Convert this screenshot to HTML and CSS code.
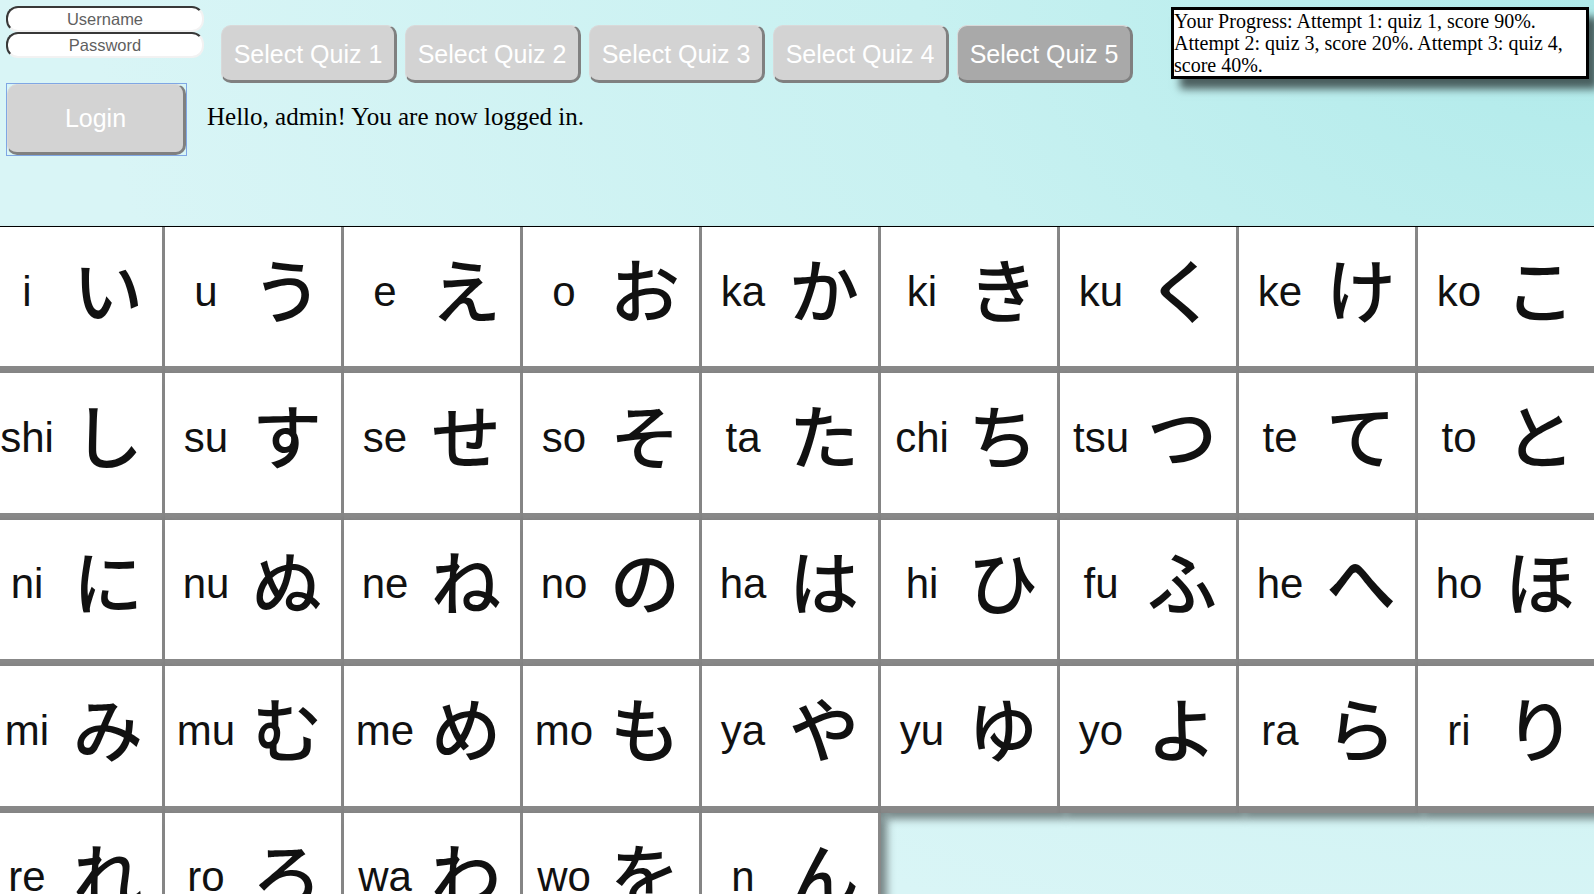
FILE: index.html
```html
<!DOCTYPE html>
<html lang="en">
<head>
<meta charset="utf-8">
<title>Hiragana Quiz</title>
<link rel="stylesheet" href="styles.css">
</head>
<body>
<header class="top">
  <div class="auth">
    <input class="field" type="text" placeholder="Username">
    <input class="field" type="password" placeholder="Password">
    <div class="login-wrap"><button class="login">Login</button></div>
  </div>
  <div class="main">
    <div class="quiz-row">
      <button class="quiz">Select Quiz 1</button>
      <button class="quiz">Select Quiz 2</button>
      <button class="quiz">Select Quiz 3</button>
      <button class="quiz">Select Quiz 4</button>
      <button class="quiz active">Select Quiz 5</button>
    </div>
    <p class="hello">Hello, admin! You are now logged in.</p>
  </div>
  <div class="progress">Your Progress: Attempt 1: quiz 1, score 90%. Attempt 2: quiz 3, score 20%. Attempt 3: quiz 4, score 40%.</div>
</header>
<section class="cards">
  <div class="card"><span class="ro">a</span><span class="kana">あ</span></div>
  <div class="card"><span class="ro">i</span><span class="kana">い</span></div>
  <div class="card"><span class="ro">u</span><span class="kana">う</span></div>
  <div class="card"><span class="ro">e</span><span class="kana">え</span></div>
  <div class="card"><span class="ro">o</span><span class="kana">お</span></div>
  <div class="card"><span class="ro">ka</span><span class="kana">か</span></div>
  <div class="card"><span class="ro">ki</span><span class="kana">き</span></div>
  <div class="card"><span class="ro">ku</span><span class="kana">く</span></div>
  <div class="card"><span class="ro">ke</span><span class="kana">け</span></div>
  <div class="card"><span class="ro">ko</span><span class="kana">こ</span></div>
  <div class="card"><span class="ro">sa</span><span class="kana">さ</span></div>
  <div class="card"><span class="ro">shi</span><span class="kana">し</span></div>
  <div class="card"><span class="ro">su</span><span class="kana">す</span></div>
  <div class="card"><span class="ro">se</span><span class="kana">せ</span></div>
  <div class="card"><span class="ro">so</span><span class="kana">そ</span></div>
  <div class="card"><span class="ro">ta</span><span class="kana">た</span></div>
  <div class="card"><span class="ro">chi</span><span class="kana">ち</span></div>
  <div class="card"><span class="ro">tsu</span><span class="kana">つ</span></div>
  <div class="card"><span class="ro">te</span><span class="kana">て</span></div>
  <div class="card"><span class="ro">to</span><span class="kana">と</span></div>
  <div class="card"><span class="ro">na</span><span class="kana">な</span></div>
  <div class="card"><span class="ro">ni</span><span class="kana">に</span></div>
  <div class="card"><span class="ro">nu</span><span class="kana">ぬ</span></div>
  <div class="card"><span class="ro">ne</span><span class="kana">ね</span></div>
  <div class="card"><span class="ro">no</span><span class="kana">の</span></div>
  <div class="card"><span class="ro">ha</span><span class="kana">は</span></div>
  <div class="card"><span class="ro">hi</span><span class="kana">ひ</span></div>
  <div class="card"><span class="ro">fu</span><span class="kana">ふ</span></div>
  <div class="card"><span class="ro">he</span><span class="kana">へ</span></div>
  <div class="card"><span class="ro">ho</span><span class="kana">ほ</span></div>
  <div class="card"><span class="ro">ma</span><span class="kana">ま</span></div>
  <div class="card"><span class="ro">mi</span><span class="kana">み</span></div>
  <div class="card"><span class="ro">mu</span><span class="kana">む</span></div>
  <div class="card"><span class="ro">me</span><span class="kana">め</span></div>
  <div class="card"><span class="ro">mo</span><span class="kana">も</span></div>
  <div class="card"><span class="ro">ya</span><span class="kana">や</span></div>
  <div class="card"><span class="ro">yu</span><span class="kana">ゆ</span></div>
  <div class="card"><span class="ro">yo</span><span class="kana">よ</span></div>
  <div class="card"><span class="ro">ra</span><span class="kana">ら</span></div>
  <div class="card"><span class="ro">ri</span><span class="kana">り</span></div>
  <div class="card"><span class="ro">ru</span><span class="kana">る</span></div>
  <div class="card"><span class="ro">re</span><span class="kana">れ</span></div>
  <div class="card"><span class="ro">ro</span><span class="kana">ろ</span></div>
  <div class="card"><span class="ro">wa</span><span class="kana">わ</span></div>
  <div class="card"><span class="ro">wo</span><span class="kana">を</span></div>
  <div class="card"><span class="ro">n</span><span class="kana">ん</span></div>
</section>
</body>
</html>
```
FILE: styles.css
```css
html, body {
  margin: 0;
  padding: 0;
  overflow: hidden;
  height: 100%;
}

body {
  background: radial-gradient(ellipse 1500px 1000px at 100% 0, #afeaea 0%, #c8f1f1 45%, #d9f5f6 100%);
  font-family: "Liberation Serif", "Times New Roman", serif;
  color: #000;
}

.top {
  display: flex;
  align-items: flex-start;
  height: 220px;
  padding: 6px 0 0 7px;
}

.auth {
  display: flex;
  flex-direction: column;
  width: 196px;
  flex: none;
}

.field {
  box-sizing: border-box;
  width: 198px;
  height: 26px;
  margin: 0 0 0 -1px;
  padding: 0 8px;
  border: 2px inset #9a9a9a;
  border-top-color: #8c8c8c;
  border-left-color: #8c8c8c;
  border-right-color: #f2f2f2;
  border-bottom-color: #f2f2f2;
  border-radius: 12px;
  background: #fff;
  font-family: "Liberation Sans", Arial, sans-serif;
  font-size: 16.5px;
  text-align: center;
  color: #333;
}

.field::placeholder {
  color: #5f5f5f;
}

.login-wrap {
  margin: 25px 0 0 -1px;
  width: 179px;
  height: 71px;
  border: 1px solid #7fa6e4;
}

.login {
  box-sizing: border-box;
  width: 179px;
  height: 71px;
  margin: 0;
  padding: 0;
  border: 1px solid #d9d9d9;
  border-right: 3px solid #808080;
  border-bottom: 3px solid #808080;
  border-radius: 10px;
  background: #d3d3d3;
  color: #fff;
  font-family: "Liberation Sans", Arial, sans-serif;
  font-size: 25px;
}

.main {
  display: flex;
  flex-direction: column;
  flex: none;
}

.quiz-row {
  display: flex;
  gap: 8px;
  margin: 19px 0 0 18px;
}

.quiz {
  box-sizing: border-box;
  width: 176px;
  height: 58px;
  margin: 0;
  padding: 2px 0 0;
  border: 1px solid #d9d9d9;
  border-right: 3px solid #808080;
  border-bottom: 3px solid #808080;
  border-radius: 10px;
  background: #d3d3d3;
  color: #fff;
  font-family: "Liberation Sans", Arial, sans-serif;
  font-size: 25px;
}

.quiz.active {
  background: #a9a9a9;
}

.hello {
  margin: 19px 0 0 4px;
  font-size: 25px;
  line-height: 29px;
}

.progress {
  box-sizing: border-box;
  width: 418px;
  margin: 1px 5px 0 auto;
  border: 3px solid #000;
  background: #fff;
  font-size: 20px;
  line-height: 22px;
  box-shadow: 9px 10px 8px rgba(0, 0, 0, 0.6);
}

.cards {
  display: grid;
  grid-template-columns: repeat(10, 179px);
  grid-auto-rows: 146.4px;
  width: 1790px;
  margin-left: -193px;
  border-top: 1px solid #000;
}

.card {
  box-sizing: border-box;
  display: grid;
  grid-template-columns: 82px 80px;
  align-items: center;
  justify-items: center;
  padding-bottom: 18px;
  background: #fff;
  border-right: 3px solid #888;
  border-bottom: 7px solid #888;
  box-shadow: 6px 6px 8px rgba(0, 0, 0, 0.45);
}

.ro {
  font-family: "Liberation Sans", Arial, sans-serif;
  font-size: 42px;
  line-height: 1;
  color: #111;
  padding-top: 8px;
}

.kana {
  font-family: "Noto Sans CJK JP", "Noto Sans CJK SC", sans-serif;
  font-size: 70px;
  font-weight: 500;
  line-height: 1;
  color: #111;
}
```
